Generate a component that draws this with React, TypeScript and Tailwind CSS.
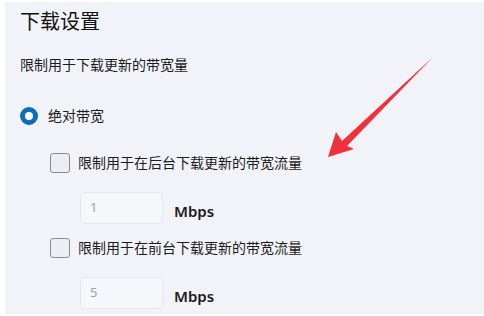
import React from 'react';

const font = { fontFamily: '"Noto Sans", "Noto Sans CJK SC", sans-serif' };

function Checkbox() {
  return <span className="w-[20px] h-[20px] shrink-0 rounded-[3px] border border-[#8a8c90] bg-[#eceef3]" />;
}

function LimitRow({ label, value }: { label: string; value: string }) {
  return (
    <div>
      <div className="flex items-center gap-[8px] pl-[50px] h-[20px]">
        <Checkbox />
        <span className="text-[14px] text-[#1b1b1b] leading-none">{label}</span>
      </div>
      <div className="flex items-center gap-[11px] pl-[80px] mt-[19px]">
        <div className="w-[83px] h-[32px] rounded-[5px] border border-[#e6e7eb] bg-[#f6f7fa] flex items-center pl-[9px] text-[13px] text-[#a0a0a0]">
          {value}
        </div>
        <span className="text-[15px] font-semibold text-[#1b1b1b] mt-[6px]">Mbps</span>
      </div>
    </div>
  );
}

export default function App() {
  return (
    <div className="w-[484px] h-[316px] bg-white pt-[2px] pl-[5px] pb-[2px] overflow-hidden" style={font}>
      <div className="relative h-full bg-[#f2f3f8]">
        <div className="pl-[15px] pt-[7px]">
          <h1 className="text-[20px] leading-[26px] text-[#111]">下载设置</h1>
          <p className="mt-[20px] text-[14px] leading-[20px] text-[#1b1b1b]">限制用于下载更新的带宽量</p>
          <div className="flex items-center gap-[10px] mt-[31px] h-[20px]">
            <span className="w-[18px] h-[18px] rounded-full border-[5px] border-[#0f6cbd] bg-white" />
            <span className="text-[14px] text-[#1b1b1b] leading-none">绝对带宽</span>
          </div>
        </div>
        <div className="-ml-[5px] mt-[27px]">
          <LimitRow label="限制用于在后台下载更新的带宽流量" value="1" />
          <div className="mt-[14px]">
            <LimitRow label="限制用于在前台下载更新的带宽流量" value="5" />
          </div>
        </div>
        <svg className="absolute left-[-5px] top-[-2px]" width="484" height="316" viewBox="0 0 484 316">
          <polygon
            points="328,157 336,132 342,141 433,57 347,146 354,149"
            fill="#f0303a"
          />
        </svg>
      </div>
    </div>
  );
}
